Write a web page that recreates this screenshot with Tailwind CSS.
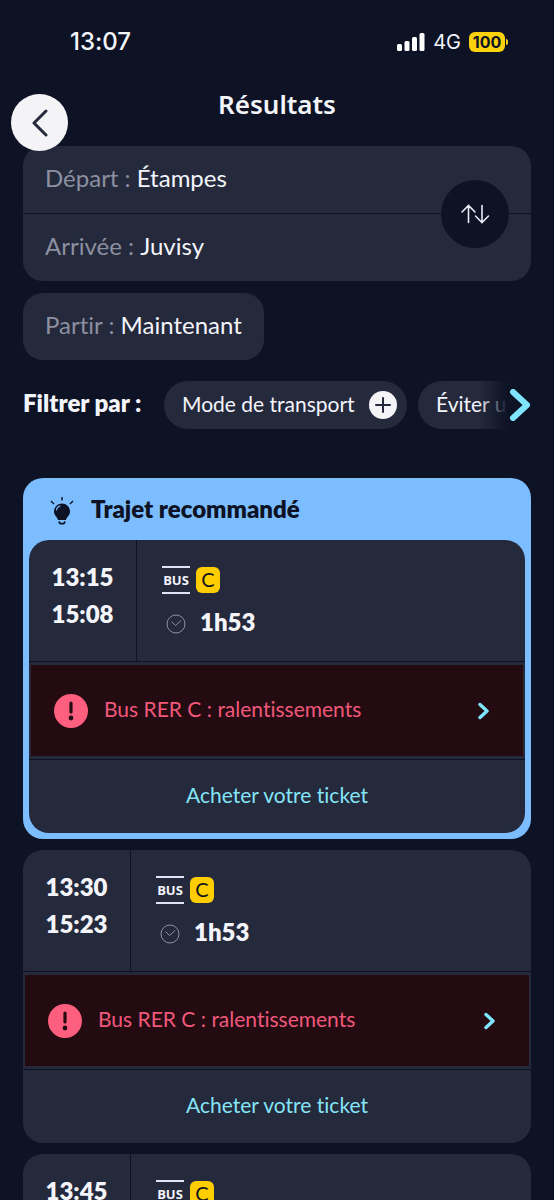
<!DOCTYPE html>
<html lang="fr">
<head>
<meta charset="utf-8">
<meta name="viewport" content="width=device-width, initial-scale=1">
<title>Résultats</title>
<script src="https://cdn.jsdelivr.net/npm/@tailwindcss/browser@4"></script>
</head>
<body class="bg-[#0d1224] text-[#f4f5fb] font-['Lato','Noto_Sans',sans-serif] text-2xl leading-7 [font-variant-ligatures:none]">
<svg class="hidden" aria-hidden="true">
  <symbol id="chevron" viewBox="0 0 12 18"><path d="M2 2.500 9 9l-7 6.500" fill="none" stroke="currentColor" stroke-width="3.400" stroke-linecap="round" stroke-linejoin="round"/></symbol>
  <symbol id="clock" viewBox="0 0 20 20"><circle cx="10" cy="10" r="9" fill="none" stroke="currentColor"/><path d="M5.500 7.500 9.500 11.500 15 6.500" fill="none" stroke="currentColor"/></symbol>
  <symbol id="alert" viewBox="0 0 34 34"><circle cx="17" cy="17" r="17" fill="#ff5f7e"/><path d="M17 9v9" stroke="#240b12" stroke-width="3.200" stroke-linecap="round"/><circle cx="17" cy="24" r="2.400" fill="#240b12"/></symbol>
</svg>
<div class="h-screen overflow-hidden">
  <div class="flex h-20 items-center justify-between pt-1 pl-[70px] pr-[46px]">
    <time class="font-['Inter',sans-serif] text-2xl font-medium">13:07</time>
    <div class="flex items-center gap-2 font-['Inter',sans-serif]">
      <svg class="h-[18px] w-7" viewBox="0 0 28 18" fill="#fff" aria-hidden="true"><rect x="0" y="11" width="5" height="7" rx="1.500"/><rect x="7.500" y="8" width="5" height="10" rx="1.500"/><rect x="15" y="4" width="5" height="14" rx="1.500"/><rect x="22.500" y="0" width="5" height="18" rx="1.500"/></svg>
      <span class="text-xl">4G</span>
      <span class="flex items-center gap-px"><span class="flex h-5 w-9 items-center justify-center rounded-md bg-[#fcd20c] text-base font-bold text-[#0d1224]">100</span><span class="h-1.5 w-0.5 rounded-r-full bg-[#fcd20c]"></span></span>
    </div>
  </div>

  <header class="relative flex h-[66px] items-start justify-center pt-2.5">
    <h1 class="font-['Noto_Sans',sans-serif] text-[26px] leading-7 font-semibold">Résultats</h1>
    <button type="button" aria-label="Retour" class="absolute top-3.5 left-[11px] z-10 flex size-[57px] items-center justify-center rounded-full bg-[#f4f4f6]">
      <svg class="h-7 w-4" viewBox="0 0 16 28" fill="none" stroke="#25293c" stroke-width="3" stroke-linecap="round" stroke-linejoin="round" aria-hidden="true"><path d="M14 2 2 14l12 12"/></svg>
    </button>
  </header>

  <main class="px-[23px]">
    <div class="relative rounded-[20px] bg-[#25293c]">
      <button type="button" class="flex h-[67px] w-full items-center pb-1 pl-[22px]"><span class="text-[#8c90a0]">Départ :&nbsp;</span>Étampes</button>
      <hr class="border-[#0d1224]">
      <button type="button" class="flex h-[67px] w-full items-center pb-1 pl-[22px]"><span class="text-[#8c90a0]">Arrivée :&nbsp;</span>Juvisy</button>
      <button type="button" aria-label="Inverser" class="absolute top-1/2 right-[22px] flex size-[68px] -translate-y-1/2 items-center justify-center rounded-full bg-[#0d1224]">
        <svg class="h-5 w-[30px]" viewBox="0 0 30 20" fill="none" stroke="#e8eaf5" stroke-width="1.600" stroke-linecap="round" aria-hidden="true"><path d="M8.500 18.500V1.500M2 8l6.500-6.500L15 8M22 1.500v17M15.500 12l6.500 6.500 6.500-6.500"/></svg>
      </button>
    </div>
    <button type="button" class="mt-3 flex h-[67px] items-center rounded-[20px] bg-[#25293c] px-[22px] pb-1"><span class="text-[#8c90a0]">Partir :&nbsp;</span>Maintenant</button>

    <div class="relative mt-[21px] flex items-center gap-[11px] overflow-hidden text-[21px] whitespace-nowrap">
      <h2 class="w-[130px] shrink-0 pb-1 text-2xl leading-7 font-extrabold">Filtrer par :</h2>
      <button type="button" class="flex h-12 w-[243px] shrink-0 items-center justify-between rounded-full bg-[#25293c] pr-2.5 pl-[18px]"><span class="pb-0.5">Mode de transport</span>
        <svg class="size-7" viewBox="0 0 28 28" aria-hidden="true"><circle cx="14" cy="14" r="14" fill="#f4f4f6"/><path d="M14 7v14M7 14h14" stroke="#25293c" stroke-width="2" stroke-linecap="round"/></svg>
      </button>
      <button type="button" class="flex h-12 shrink-0 items-center rounded-full bg-[#25293c] px-[18px]"><span class="pb-0.5">Éviter une ligne</span></button>
      <div class="absolute inset-y-0 right-0 flex w-13 items-center justify-end bg-linear-to-r from-[#0d1224]/0 to-[#0d1224] to-55%">
        <button type="button" aria-label="Filtres suivants"><svg class="h-8 w-[22px]" viewBox="0 0 22 32" fill="none" stroke="#7fe5ff" stroke-width="6" stroke-linecap="round" stroke-linejoin="round" aria-hidden="true"><path d="M4 3 18 16 4 29"/></svg></button>
      </div>
    </div>

    <section class="mt-[49px] rounded-[20px] bg-[#7cbdff] px-1.5 pb-1.5">
      <h2 class="flex h-[62px] items-center gap-[17px] pt-1 pl-[21px] font-extrabold text-[#0d1224]">
        <svg class="h-7 w-6" viewBox="0 0 24 28" aria-hidden="true"><path d="M12 0v3.500M1 4 4 7M23 4 20 7" stroke="#0d1224" stroke-width="1.400"/><path d="M12 6.500a8 8 0 0 0-8 8c0 4 3.500 5.500 4 8.500h8c.5-3 4-4.500 4-8.500a8 8 0 0 0-8-8z" fill="#0d1224"/><path d="M9 24.500c.5 3 5.500 3 6 0" fill="none" stroke="#0d1224" stroke-width="1.600"/><path d="M6.500 13c.3-2 1.500-3.500 3.500-4" fill="none" stroke="#7cbdff" stroke-width="1.200" stroke-linecap="round"/></svg>
        <span class="pb-1">Trajet recommandé</span>
      </h2>
      <article class="overflow-hidden rounded-[20px] bg-[#25293c]">
        <div class="flex h-[122px] border-b border-[#0d1224]">
          <div class="w-[108px] border-r border-[#0d1224] pt-[18px] text-center leading-[37px] font-extrabold"><time class="block">13:15</time><time class="block">15:08</time></div>
          <div class="pt-[26px] pl-[25px]">
            <div class="flex items-center gap-1.5"><span class="flex h-7 w-7 items-center justify-center border-y-2 border-[#dfe2f2] font-['Liberation_Sans_Narrow','Open_Sans',sans-serif] text-[13px] font-bold">BUS</span><span class="flex h-[26px] w-6 items-center justify-center rounded-md bg-[#ffcd00] pb-0.5 text-xl text-[#10121c]">C</span></div>
            <div class="mt-3.5 flex items-center gap-3.5 pl-1 font-extrabold"><svg class="mt-1 size-5 text-[#8c90a0]" aria-hidden="true"><use href="#clock"/></svg>1h53</div>
          </div>
        </div>
        <a href="#alerte" class="flex h-[97px] items-center border-x-2 border-y-3 border-[#25293c] bg-[#240b12] pr-[33px] pl-[23px] text-[21px] text-[#f0587a]"><svg class="mr-4 size-[34px]" aria-hidden="true"><use href="#alert"/></svg><span class="grow pb-1">Bus RER C : ralentissements</span><svg class="h-[18px] w-3 text-[#7fe5ff]" aria-hidden="true"><use href="#chevron"/></svg></a>
        <a href="#ticket" class="flex h-[74px] items-center justify-center border-t border-[#0d1224] pb-1 text-[21px] text-[#84e4f7]">Acheter votre ticket</a>
      </article>
    </section>

    <article class="mt-[11px] overflow-hidden rounded-[20px] bg-[#25293c]">
      <div class="flex h-[122px] border-b border-[#0d1224]">
        <div class="w-[108px] border-r border-[#0d1224] pt-[18px] text-center leading-[37px] font-extrabold"><time class="block">13:30</time><time class="block">15:23</time></div>
        <div class="pt-[26px] pl-[25px]">
          <div class="flex items-center gap-1.5"><span class="flex h-7 w-7 items-center justify-center border-y-2 border-[#dfe2f2] font-['Liberation_Sans_Narrow','Open_Sans',sans-serif] text-[13px] font-bold">BUS</span><span class="flex h-[26px] w-6 items-center justify-center rounded-md bg-[#ffcd00] pb-0.5 text-xl text-[#10121c]">C</span></div>
          <div class="mt-3.5 flex items-center gap-3.5 pl-1 font-extrabold"><svg class="mt-1 size-5 text-[#8c90a0]" aria-hidden="true"><use href="#clock"/></svg>1h53</div>
        </div>
      </div>
      <a href="#alerte" class="flex h-[97px] items-center border-x-2 border-y-3 border-[#25293c] bg-[#240b12] pr-[33px] pl-[23px] text-[21px] text-[#f0587a]"><svg class="mr-4 size-[34px]" aria-hidden="true"><use href="#alert"/></svg><span class="grow pb-1">Bus RER C : ralentissements</span><svg class="h-[18px] w-3 text-[#7fe5ff]" aria-hidden="true"><use href="#chevron"/></svg></a>
      <a href="#ticket" class="flex h-[74px] items-center justify-center border-t border-[#0d1224] pb-1 text-[21px] text-[#84e4f7]">Acheter votre ticket</a>
    </article>

    <article class="mt-[11px] overflow-hidden rounded-[20px] bg-[#25293c]">
      <div class="flex h-[122px] border-b border-[#0d1224]">
        <div class="w-[108px] border-r border-[#0d1224] pt-[18px] text-center leading-[37px] font-extrabold"><time class="block">13:45</time></div>
        <div class="pt-[26px] pl-[25px]">
          <div class="flex items-center gap-1.5"><span class="flex h-7 w-7 items-center justify-center border-y-2 border-[#dfe2f2] font-['Liberation_Sans_Narrow','Open_Sans',sans-serif] text-[13px] font-bold">BUS</span><span class="flex h-[26px] w-6 items-center justify-center rounded-md bg-[#ffcd00] pb-0.5 text-xl text-[#10121c]">C</span></div>
        </div>
      </div>
    </article>
  </main>
</div>
</body>
</html>
